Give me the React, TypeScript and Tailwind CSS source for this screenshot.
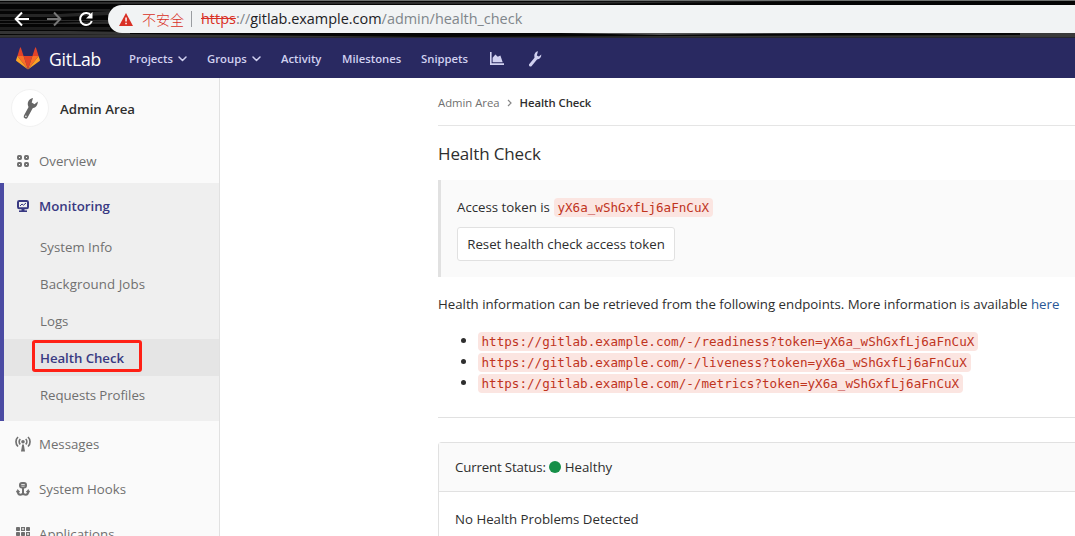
import type { ReactNode } from 'react';

function BrowserBar() {
  return (
    <div className="relative flex h-[38px] shrink-0 items-start bg-black">
      <svg className="absolute inset-0" width="1075" height="38" preserveAspectRatio="none">
        <rect width="1075" height="38" fill="#050505" />
        <rect width="1075" height="1" fill="#6e7170" />
        <path d="M0 2h520l300-1-260 3H0z" fill="#2e2e2e" />
        <path d="M0 9h110v2H0z" fill="#202020" />
        <path d="M0 14h60l50-3v4l-50 2H0z" fill="#262626" />
        <path d="M0 20h110v1H0zM0 23h50l60-2v3H0z" fill="#2a2a2a" />
        <path d="M0 27h110v3H0z" fill="#1d1d1d" />
        <path d="M0 31h70l60 1v2H0z" fill="#343434" />
        <path d="M0 35l130-1 300 3 590-2v2H0z" fill="#343434" />
        <path d="M560 33h280l-180 2z" fill="#555" />
        <path d="M0 37h1075v1H0z" fill="#262630" />
        <rect x="1020" y="33" width="55" height="4" fill="#3a3a3a" />
      </svg>
      <div className="relative flex h-[38px] w-[108px] shrink-0 items-center">
        <svg width="108" height="38" fill="none" strokeWidth="2">
          <path d="M29 19H16.5M22 12.5L15.7 19l6.3 6.5" stroke="#fff" />
          <path d="M47 19h12.500M54 12.500L60.300 19 54 25.500" stroke="#777" />
          <path d="M91 15.500A6 6 0 1 0 91.800 21" stroke="#fff" />
          <path d="M92.500 12v6.500H86z" fill="#fff" />
        </svg>
      </div>
      <div className="relative mt-[5px] flex h-7 flex-1 items-center overflow-hidden rounded-l-full bg-[#f1f3f4] pl-[11px] font-['Open_Sans','Noto_Sans_CJK_SC',sans-serif] whitespace-nowrap">
        <svg width="14" height="13" viewBox="0 0 14 13">
          <path d="M7 0l7 13H0z" fill="#d93025" />
          <path d="M6.300 4.500h1.500v4H6.300zM6.300 9.700h1.500v1.500H6.300z" fill="#fff" />
        </svg>
        <span className="ml-[9px] font-['Noto_Sans_CJK_SC',sans-serif] text-[14px] leading-7 font-light text-[#d93025]">不安全</span>
        <span className="ml-[7px] h-4 w-px bg-[#9a9da1]" />
        <span className="ml-[9px] text-[14.450px] leading-7 text-[#80868b]">
          <span className="text-[#d93025] line-through">https</span>
          ://<span className="text-[#202124]">gitlab.example.com</span>/admin/health_check
        </span>
      </div>
    </div>
  );
}

function Chevron() {
  return (
    <svg className="ml-[5px]" width="9" height="6" fill="none" stroke="#d1d1f0" strokeWidth="1.500" strokeLinecap="round" strokeLinejoin="round">
      <path d="M1 1l3.500 3.500L8 1" />
    </svg>
  );
}

function NavBar() {
  return (
    <nav className="flex h-10 shrink-0 items-center bg-[#292961] pt-px text-[11.300px] font-semibold text-[#d1d1f0]">
      <svg className="ml-4" width="24" height="23" viewBox="0 0 24 23">
        <path fill="#e24329" d="M12 22.500L16.400 9H7.600z" />
        <path fill="#fc6d26" d="M12 22.500L7.600 9H1.400zM12 22.500L16.400 9h6.200z" />
        <path fill="#fca326" d="M1.400 9L.1 13.100a.9.900 0 0 0 .3 1L12 22.500zM22.600 9l1.300 4.100a.9.900 0 0 1-.3 1L12 22.500z" />
        <path fill="#e24329" d="M1.400 9h6.200L4.900.8a.45.450 0 0 0-.9 0zM22.600 9h-6.200L19.100.8a.45.450 0 0 1 .9 0z" />
      </svg>
      <span className="ml-[9px] w-[80px] text-[17.600px] font-normal tracking-[-0.2px] text-white">GitLab</span>
      <span className="flex w-[78px] items-center pt-px">Projects<Chevron /></span>
      <span className="flex w-[74px] items-center pt-px">Groups<Chevron /></span>
      <span className="w-[61px] pt-px">Activity</span>
      <span className="w-[79px] pt-px">Milestones</span>
      <span className="w-[69px] pt-px">Snippets</span>
      <svg width="14" height="14" viewBox="0 0 14 14" fill="#d1d1f0">
        <path d="M0 0h1.600v11.200H14V13H0z" />
        <path d="M2.600 10.200V5.800L5.400 2.500l2.400 2.200 2.600-1.300 2.300 6.800z" />
      </svg>
      <svg className="ml-[25px]" width="14" height="16" viewBox="0 0 14 16">
        <path d="M1.500 14L7.700 6.500" stroke="#d1d1f0" strokeWidth="3" strokeLinecap="round" />
        <path d="M9 .3C6 .7 4.500 4 5.800 7c2.200 2.800 6.700 1 6.500-3.500L9.900 5.600 7.800 4.500z" fill="#d1d1f0" />
      </svg>
    </nav>
  );
}

function OverviewIcon() {
  return (
    <svg width="12" height="12" fill="none" stroke="#707070" strokeWidth="2">
      <rect x="1" y="1" width="3" height="3" rx=".7" />
      <rect x="8" y="1" width="3" height="3" rx=".7" />
      <rect x="1" y="8" width="3" height="3" rx=".7" />
      <rect x="8" y="8" width="3" height="3" rx=".7" />
    </svg>
  );
}

function MonitorIcon() {
  return (
    <svg width="12" height="12" fill="none" stroke="#393982">
      <rect x="1" y="1" width="10" height="7.300" rx="1.200" strokeWidth="2" />
      <path d="M3 6l2-2 1.500 1.200L9 3" />
      <path d="M6 8v3" strokeWidth="3" />
      <path d="M2 11.200h8" strokeWidth="1.600" />
    </svg>
  );
}

function BroadcastIcon() {
  return (
    <svg width="16" height="16" fill="none" stroke="#707070" strokeWidth="1.700">
      <path d="M3 1C.3 3.500.3 8 3 10.500M5.300 3c-1.500 1.500-1.500 3.900 0 5.400M13 1c2.700 2.500 2.700 7 0 9.500M10.700 3c1.500 1.500 1.500 3.900 0 5.400" />
      <circle cx="8" cy="5.700" r="1.800" fill="#707070" stroke="none" />
      <path d="M7.200 8.500h1.600L10 15.500H6z" fill="#707070" stroke="none" />
    </svg>
  );
}

function HookIcon() {
  return (
    <svg width="14" height="14" fill="none" stroke="#707070" strokeWidth="2">
      <rect x="4" y="1" width="6" height="4.600" rx="2" />
      <path d="M4 3.300h6" strokeWidth="1" />
      <path d="M7 6v6M1.700 9c0 2.700 1 3.800 2.600 3.800 1.500 0 2.400-.7 2.700-1.800.3 1.100 1.200 1.800 2.700 1.800 1.600 0 2.600-1.100 2.600-3.800" />
      <path d="M.3 10L1.700 7.500 3.900 10zM13.700 10l-1.400-2.500L10.100 10z" strokeWidth=".6" fill="#707070" />
    </svg>
  );
}

function AppsIcon() {
  return (
    <svg width="14" height="14" fill="#707070">
      <rect width="4" height="4" rx=".8" />
      <rect x="5.600" y=".6" width="2.800" height="2.800" fill="none" stroke="#707070" strokeWidth="1.200" />
      <rect x="10" width="4" height="4" rx=".8" />
      <rect y="5" width="4" height="4" rx=".8" />
      <rect x="5" y="5" width="4" height="4" rx=".8" />
      <rect x="10.600" y="5.600" width="2.800" height="2.800" fill="none" stroke="#707070" strokeWidth="1.200" />
      <rect y="10" width="4" height="4" rx=".8" />
      <rect x="5" y="10" width="4" height="4" rx=".8" />
      <rect x="10" y="10" width="4" height="4" rx=".8" />
    </svg>
  );
}

function SideRow({ icon, children }: { icon: ReactNode; children: ReactNode }) {
  return (
    <div className="flex h-[45px] shrink-0 items-center">
      <span className="flex w-[39px] shrink-0 items-center justify-center pl-[7px]">{icon}</span>
      <span className="flex-1">{children}</span>
    </div>
  );
}

function SubRow({ children }: { children: ReactNode }) {
  return <div className="flex h-[37px] items-center pl-9">{children}</div>;
}

function Sidebar() {
  return (
    <aside className="flex w-[220px] shrink-0 flex-col overflow-hidden border-r border-[#e1e1e1] bg-[#fafafa] text-[#707070]">
      <div className="flex h-[60px] shrink-0 items-center pl-[11px]">
        <span className="flex size-[38px] items-center justify-center rounded-full border border-[#f2f2f2] bg-white">
          <svg width="18" height="23" viewBox="0 0 18 23" className="ml-[2px]">
            <path d="M3.800 19.500L9.500 9" stroke="#666" strokeWidth="4.200" strokeLinecap="round" />
            <path d="M11 1C6.300 2 4.600 6.500 6.600 9.900c3.700 2.900 9.300.5 9.200-5.500l-3.300 2.800-2.800-1.600z" fill="#666" />
            <circle cx="3.900" cy="19.300" r=".8" fill="#fff" />
          </svg>
        </span>
        <span className="ml-[11px] pt-[2px] font-semibold text-[#2e2e2e]">Admin Area</span>
      </div>
      <SideRow icon={<OverviewIcon />}>Overview</SideRow>
      <div className="h-[238px] shrink-0 border-l-4 border-[#4b4ba3] bg-[#efefef]">
        <div className="-ml-1 font-semibold text-[#393982]">
          <SideRow icon={<MonitorIcon />}>Monitoring</SideRow>
        </div>
        <SubRow>System Info</SubRow>
        <SubRow><span className="tracking-[0.1px]">Background Jobs</span></SubRow>
        <SubRow>Logs</SubRow>
        <div className="relative bg-[#e5e5e5] font-semibold text-[#393982]">
          <SubRow><span className="tracking-[-0.06px]">Health Check</span></SubRow>
          <span className="absolute top-[1px] left-[28px] h-8 w-[110px] rounded-[3px] border-3 border-[#ff2015]" />
        </div>
        <SubRow><span className="tracking-[-0.08px]">Requests Profiles</span></SubRow>
      </div>
      <SideRow icon={<BroadcastIcon />}>Messages</SideRow>
      <SideRow icon={<HookIcon />}>System Hooks</SideRow>
      <SideRow icon={<AppsIcon />}>Applications</SideRow>
    </aside>
  );
}

function Code({ children }: { children: ReactNode }) {
  return (
    <code className="inline-block h-[19px] rounded-[4px] bg-[#fbe5e1] pr-1 pl-[3.500px] font-['DejaVu_Sans_Mono',monospace] text-[12.600px] leading-[19px] text-[#c0341d]">
      {children}
    </code>
  );
}

const endpoints = ['readiness', 'liveness', 'metrics'];

function Content() {
  return (
    <main className="flex min-w-0 flex-1 flex-col pl-[218px] whitespace-nowrap text-[#2e2e2e]">
      <div className="flex h-12 shrink-0 items-center border-b border-[#e5e5e5] pt-[2px] text-[11.300px]">
        <span className="text-[#707070]">Admin Area</span>
        <svg className="mr-[8px] ml-[7px]" width="5" height="8" fill="none" stroke="#868686" strokeWidth="1.200">
          <path d="M1 1l3 3-3 3" />
        </svg>
        <span className="font-semibold tracking-[-0.05px]">Health Check</span>
      </div>
      <h3 className="h-[54px] shrink-0 text-[17px] leading-[55px] font-medium tracking-[-0.15px]">Health Check</h3>
      <section className="h-[97px] shrink-0 border-l-3 border-[#e1e1e1] bg-[#fafafa] pt-[17px] pl-4">
        <div className="flex h-[21px] items-center">
          <span className="mr-[4px] -mt-px">Access token is</span>
          <Code>yX6a_wShGxfLj6aFnCuX</Code>
        </div>
        <button className="mt-[9px] flex h-[34px] w-[218px] items-center justify-center rounded-[3px] border border-[#e1e1e1] bg-white">
          Reset health check access token
        </button>
      </section>
      <p className="mt-[17px] h-[21px] shrink-0 leading-[21px] tracking-[-0.01px]">
        Health information can be retrieved from the following endpoints. More information is available{' '}
        <a className="text-[#2a5796]">here</a>
      </p>
      <ul className="mt-4 shrink-0">
        {endpoints.map((name) => (
          <li key={name} className="flex h-[21px] items-center">
            <span className="mr-3 mb-[2px] ml-[23px] size-[5px] rounded-full bg-[#2e2e2e]" />
            <Code>{`https://gitlab.example.com/-/${name}?token=yX6a_wShGxfLj6aFnCuX`}</Code>
          </li>
        ))}
      </ul>
      <hr className="mt-[23px] shrink-0 border-[#e1e1e1]" />
      <section className="mt-6 h-[120px] shrink-0 rounded-tl-[4px] border-t border-l border-[#e1e1e1]">
        <div className="flex h-[49px] items-center border-b border-[#e1e1e1] bg-[#fafafa] pl-4">
          <span className="tracking-[-0.15px]">Current Status:</span>
          <span className="mr-1 ml-[3px] size-3 rounded-full bg-[#168f48]" />
          Healthy
        </div>
        <div className="flex h-[54px] items-center pl-4">No Health Problems Detected</div>
      </section>
    </main>
  );
}

export default function App() {
  return (
    <div className="flex h-[536px] w-[1075px] flex-col overflow-hidden bg-white font-['Open_Sans','Noto_Sans',sans-serif] text-[13.250px] leading-5">
      <BrowserBar />
      <NavBar />
      <div className="flex min-h-0 flex-1 items-stretch">
        <Sidebar />
        <Content />
      </div>
    </div>
  );
}
